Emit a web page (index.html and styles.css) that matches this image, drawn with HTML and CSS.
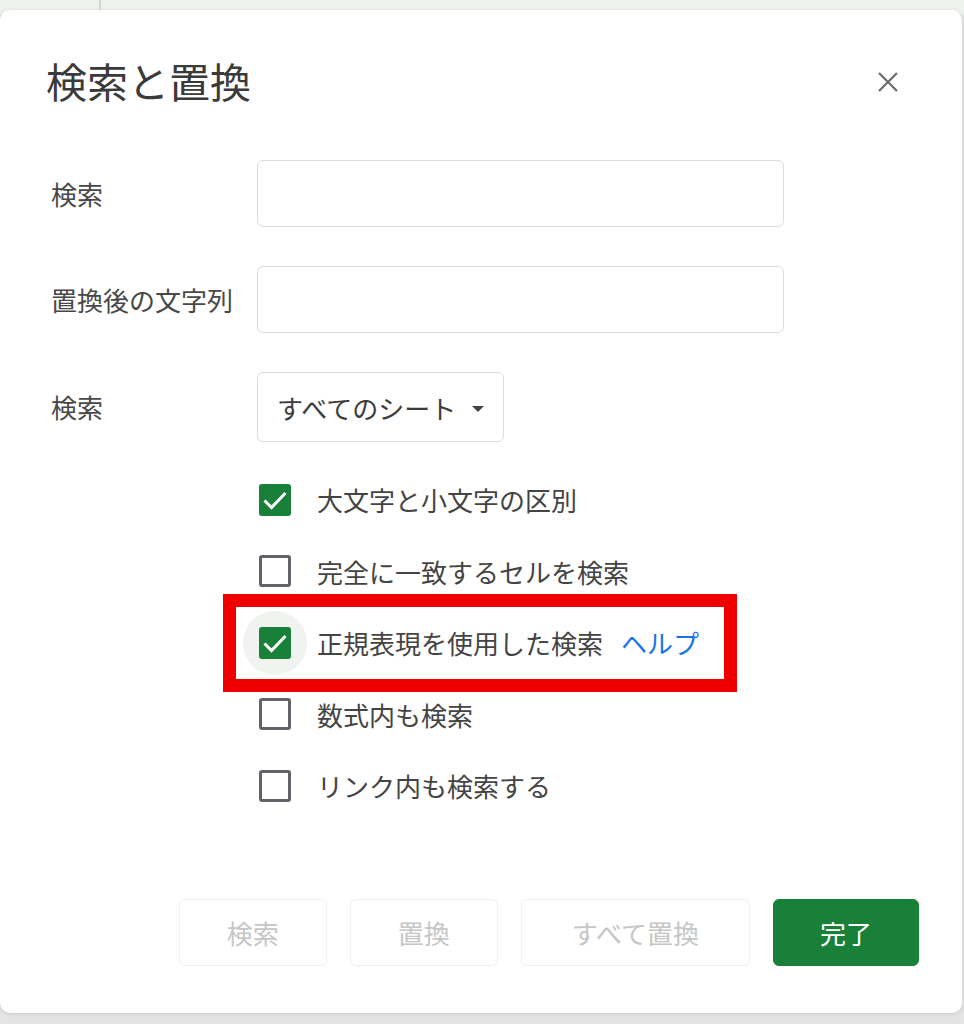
FILE: index.html
```html
<!DOCTYPE html>
<html lang="ja">
<head>
    <meta charset="UTF-8">
    <meta name="viewport" content="width=device-width, initial-scale=1.0">
    <title>検索と置換</title>
    <link rel="stylesheet" href="styles.css">
</head>
<body>
    <div class="sheet-strip">
        <div class="sheet-col"></div>
    </div>

    <div class="dialog">
        <div class="dialog-head">
            <h1>検索と置換</h1>
            <button type="button" class="close-btn" aria-label="閉じる">
                <svg width="22" height="22" viewBox="0 0 22 22">
                    <path d="M2 2 L20 20 M20 2 L2 20" stroke="#6b6b6b" stroke-width="2.2" fill="none"/>
                </svg>
            </button>
        </div>

        <div class="field-row">
            <label class="field-label">検索</label>
            <input type="text" class="text-input">
        </div>
        <div class="field-row">
            <label class="field-label">置換後の文字列</label>
            <input type="text" class="text-input">
        </div>
        <div class="field-row select-row">
            <label class="field-label">検索</label>
            <div class="select-box">
                <span>すべてのシート</span>
                <span class="caret"></span>
            </div>
        </div>

        <div class="options">
            <div class="option">
                <span class="check checked">
                    <svg class="tick" viewBox="0 0 26 26"><path d="M2.5 13.5 L9.5 20.5 L23.5 6" stroke="#fff" stroke-width="3" fill="none"/></svg>
                </span>
                <span>大文字と小文字の区別</span>
            </div>
            <div class="option">
                <span class="check"></span>
                <span>完全に一致するセルを検索</span>
            </div>
            <div class="option marked">
                <span class="ripple"></span>
                <span class="check checked">
                    <svg class="tick" viewBox="0 0 26 26"><path d="M2.5 13.5 L9.5 20.5 L23.5 6" stroke="#fff" stroke-width="3" fill="none"/></svg>
                </span>
                <span>正規表現を使用した検索</span>
                <a href="#" class="help-link">ヘルプ</a>
            </div>
            <div class="option">
                <span class="check"></span>
                <span>数式内も検索</span>
            </div>
            <div class="option">
                <span class="check"></span>
                <span>リンク内も検索する</span>
            </div>
        </div>

        <div class="actions">
            <button type="button" class="btn" disabled>検索</button>
            <button type="button" class="btn" disabled>置換</button>
            <button type="button" class="btn btn-wide" disabled>すべて置換</button>
            <button type="button" class="btn btn-done">完了</button>
        </div>
    </div>
</body>
</html>
```

FILE: styles.css
```css
body {
    margin: 0;
    padding: 0;
    background-color: #e3e4e3;
    font-family: "Noto Sans CJK JP", "Noto Sans", sans-serif;
    color: #444;
    height: 1024px;
    overflow: hidden;
    position: relative;
}

.sheet-strip {
    height: 14px;
    background-color: #eef2ee;
}

.sheet-col {
    width: 2px;
    height: 100%;
    margin-left: 99px;
    background-color: #d4d6d4;
}

/* modal sits over the sheet */
.dialog {
    position: absolute;
    top: 10px;
    left: 0;
    width: 962px;
    height: 1003px;
    box-sizing: border-box;
    background-color: #fff;
    border-radius: 10px;
    box-shadow: 0 1px 4px rgba(0, 0, 0, 0.12);
    padding: 46px 43px 0 46px;
}

.dialog-head {
    display: flex;
    align-items: center;
    justify-content: space-between;
    height: 48px;
    margin-bottom: 56px;
}

.dialog-head h1 {
    margin: 0;
    font-size: 41px;
    font-weight: 400;
    color: #3a3a3a;
    line-height: 48px;
}

.close-btn {
    background: none;
    border: none;
    padding: 0;
    width: 22px;
    height: 22px;
    margin-right: 20px;
    margin-top: 4px;
    cursor: pointer;
}

.field-row {
    display: flex;
    align-items: center;
    margin-bottom: 39px;
}

.field-label {
    width: 211px;
    padding-left: 5px;
    box-sizing: border-box;
    font-size: 26px;
    line-height: 30px;
    color: #484848;
}

.text-input {
    width: 527px;
    height: 67px;
    box-sizing: border-box;
    border: 1.5px solid #dcdcdc;
    border-radius: 6px;
    font-size: 26px;
    outline: none;
}

.select-row {
    margin-top: 1px;
    margin-bottom: 22px;
}

.select-box {
    display: flex;
    align-items: center;
    height: 70px;
    box-sizing: border-box;
    border: 1.5px solid #dcdcdc;
    border-radius: 6px;
    padding: 0 19px 0 19px;
    font-size: 26px;
    color: #3c3c3c;
    gap: 16px;
}

.caret {
    width: 0;
    height: 0;
    border-left: 6px solid transparent;
    border-right: 6px solid transparent;
    border-top: 6px solid #444;
    margin-top: 3px;
}

.options {
    padding-left: 213px;
}

.option {
    display: flex;
    align-items: center;
    width: fit-content;
    height: 71.5px;
    font-size: 26px;
    color: #444;
    position: relative;
}

.check {
    flex-shrink: 0;
    width: 32px;
    height: 32px;
    box-sizing: border-box;
    border: 3px solid #606368;
    border-radius: 3px;
    margin-right: 26px;
    display: flex;
    align-items: center;
    justify-content: center;
    position: relative;
}

.check.checked {
    background-color: #188038;
    border-color: #188038;
}

.tick {
    width: 26px;
    height: 26px;
    flex-shrink: 0;
}

.ripple {
    position: absolute;
    left: -16px;
    top: 4px;
    width: 64px;
    height: 64px;
    border-radius: 50%;
    background-color: #f1f3f1;
}

.marked::after {
    content: "";
    position: absolute;
    left: -36px;
    right: -38px;
    top: -13px;
    bottom: -13px;
    border: 13px solid #ee0000;
}

.help-link {
    color: #1a73e8;
    text-decoration: none;
    margin-left: 18px;
}

.actions {
    display: flex;
    justify-content: flex-end;
    gap: 23px;
    margin-top: 77px;
}

.btn {
    height: 67px;
    padding: 0 47px;
    background-color: #fff;
    border: 1px solid #f0f0f0;
    border-radius: 6px;
    font-family: inherit;
    font-size: 26px;
    color: #c6c6c6;
}

.btn-wide {
    padding: 0 50px;
}

.btn-done {
    background-color: #188038;
    border-color: #188038;
    color: #fff;
    padding: 0 46px;
    cursor: pointer;
}
```
